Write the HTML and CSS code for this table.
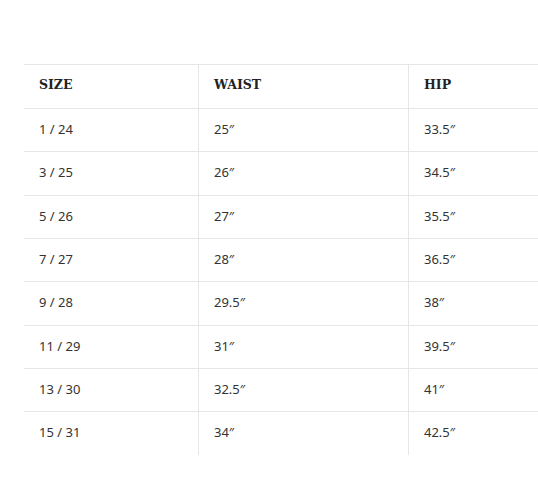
FILE: index.html
```html
<!DOCTYPE html>
<html>
<head>
<meta charset="utf-8">
<link rel="stylesheet" href="styles.css">
</head>
<body>
<div class="wrap">
<table class="size-table">
  <thead>
    <tr><th class="c1">SIZE</th><th class="c2">WAIST</th><th class="c3">HIP</th></tr>
  </thead>
  <tbody>
    <tr><td>1 / 24</td><td>25″</td><td>33.5″</td></tr>
    <tr><td>3 / 25</td><td>26″</td><td>34.5″</td></tr>
    <tr><td>5 / 26</td><td>27″</td><td>35.5″</td></tr>
    <tr><td>7 / 27</td><td>28″</td><td>36.5″</td></tr>
    <tr><td>9 / 28</td><td>29.5″</td><td>38″</td></tr>
    <tr><td>11 / 29</td><td>31″</td><td>39.5″</td></tr>
    <tr><td>13 / 30</td><td>32.5″</td><td>41″</td></tr>
    <tr><td>15 / 31</td><td>34″</td><td>42.5″</td></tr>
  </tbody>
</table>
</div>
</body>
</html>
```

FILE: styles.css
```css
html, body {
  margin: 0;
  padding: 0;
  background: #fff;
  overflow: hidden;
}
.wrap {
  padding: 64px 0 0 24px;
}
.size-table {
  border-collapse: separate;
  border-spacing: 0;
  table-layout: fixed;
  width: 514px;
  font-family: "Noto Sans", "Open Sans", sans-serif;
  font-size: 13px;
  color: #333;
}
.c1 { width: 174px; }
.c2 { width: 210px; }
.c3 { width: 130px; }
th, td {
  box-sizing: border-box;
  text-align: left;
  vertical-align: middle;
  padding: 0 0 2px 15px;
  border-top: 1px solid #e6e6e6;
  height: 43.33px;
}
th {
  font-family: "DejaVu Serif", "Liberation Serif", serif;
  font-weight: bold;
  font-size: 12.5px;
  color: #222;
  height: 44px;
  padding-bottom: 4px;
}
th + th, td + td {
  border-left: 1px solid #e6e6e6;
}
```
